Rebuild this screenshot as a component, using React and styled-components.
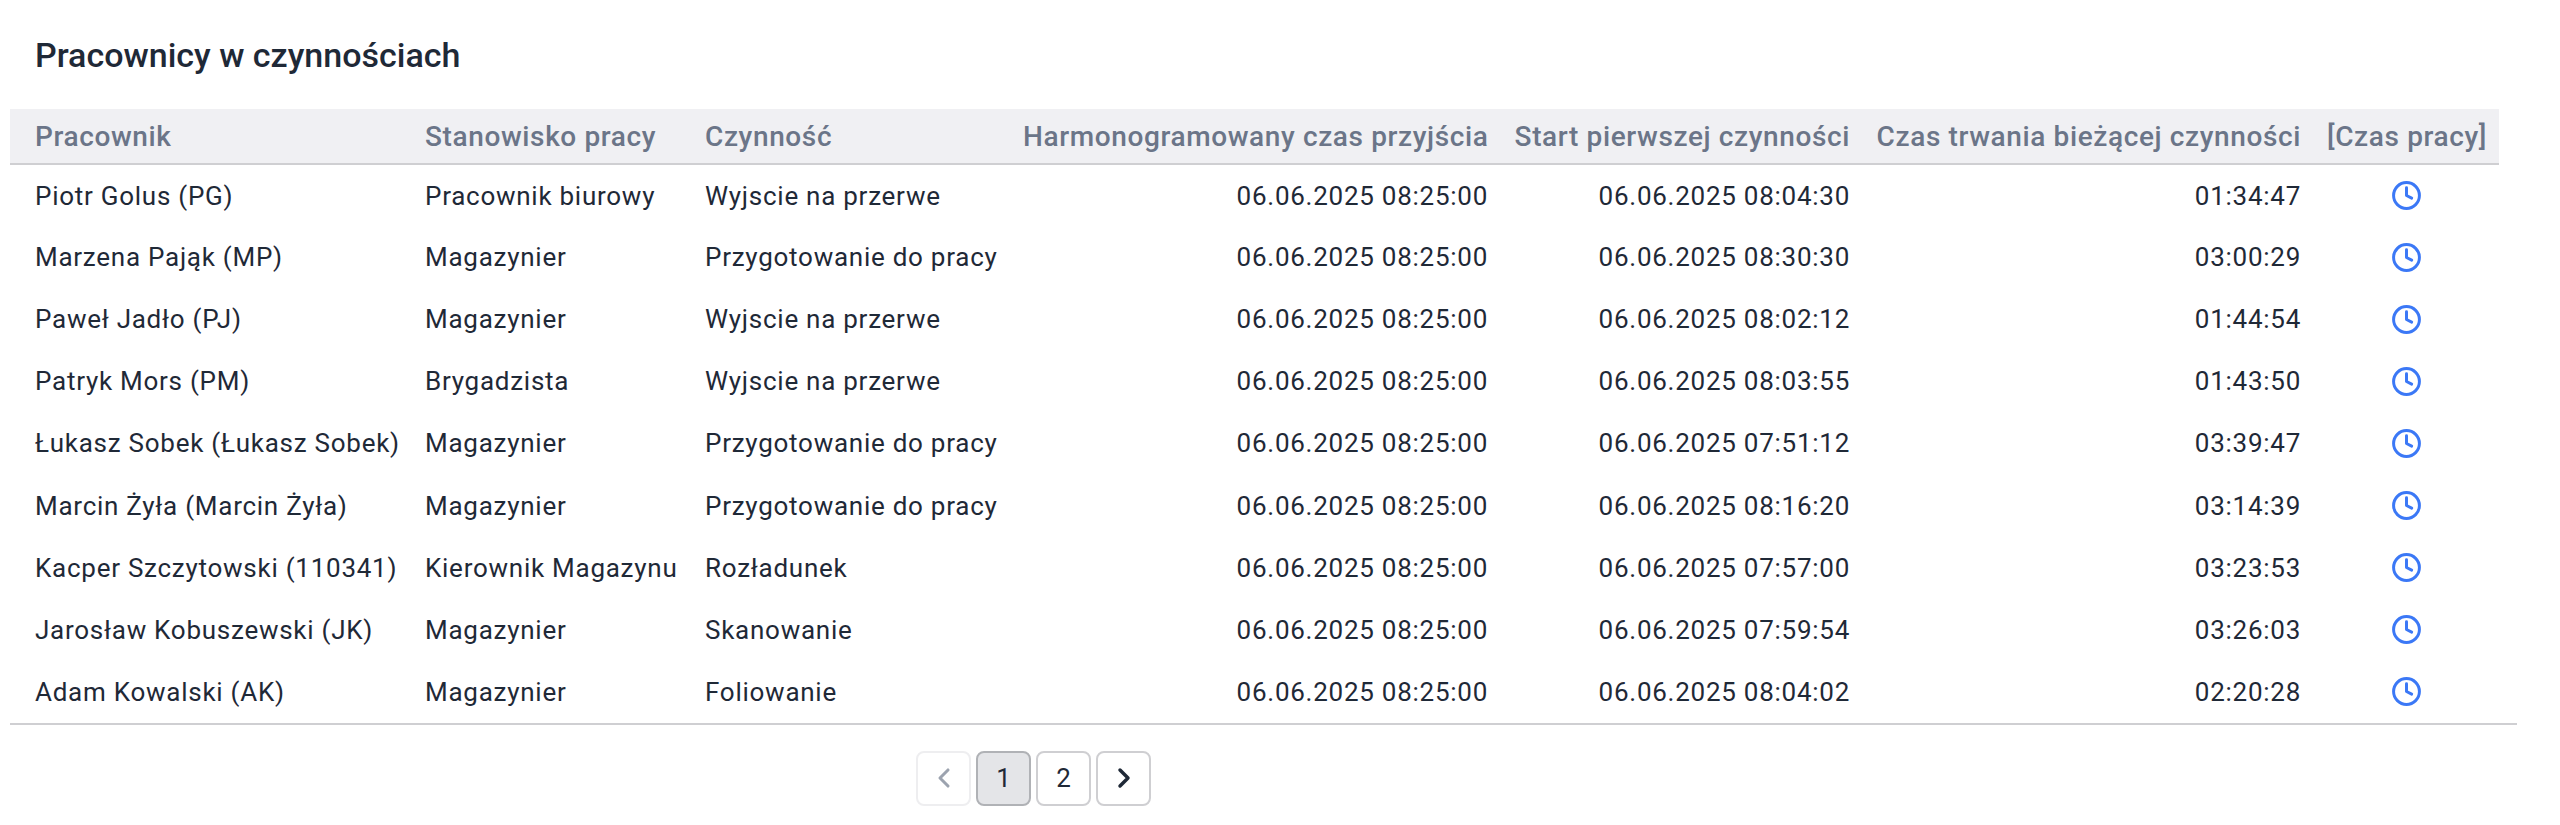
import React from 'react';
import styled, { createGlobalStyle } from 'styled-components';
import { Clock, ChevronLeft, ChevronRight } from 'lucide-react';

const Global = createGlobalStyle`
  html, body { margin: 0; padding: 0; background: #fff; }
  body { font-family: Roboto, "Liberation Sans", sans-serif; color: #1f2937; }
`;

const Page = styled.div`
  width: 2560px;
  height: 825px;
  padding: 0 43px 0 10px;
  box-sizing: border-box;
  overflow: hidden;
`;

const Title = styled.h1`
  margin: 0;
  height: 109px;
  padding: 35px 0 0 25px;
  box-sizing: border-box;
  font-size: 34px;
  line-height: 40px;
  font-weight: 500;
  color: #1f2937;
`;

const TableFrame = styled.div`
  border-bottom: 2px solid #cfcfd2;
`;

const Table = styled.table`
  width: 2489px;
  table-layout: fixed;
  border-collapse: collapse;
`;

const Head = styled.th`
  height: 55px;
  padding: 0 13px;
  box-sizing: border-box;
  background: #f0f0f3;
  border-bottom: 2px solid #cfcfd2;
  width: ${p => p.$w}px;
  text-align: ${p => p.$align || 'left'};
  font-size: 28px;
  font-weight: 500;
  letter-spacing: 0.62px;
  white-space: nowrap;
  color: #6b7588;
  &:first-child { padding-left: 25px; }
`;

const Cell = styled.td`
  height: 62.1px;
  padding: 0 13px;
  box-sizing: border-box;
  text-align: ${p => p.$align || 'left'};
  font-size: 26px;
  letter-spacing: 0.74px;
  white-space: nowrap;
  color: #1f2937;
  &:first-child { padding-left: 25px; }
`;

const ClockIcon = styled(Clock)`
  display: block;
  margin: 0 auto;
  width: 31px;
  height: 31px;
  color: #3b78f6;
`;

const Pager = styled.nav`
  display: flex;
  gap: 5px;
  padding: 26px 0 0 906px;
`;

const PageButton = styled.button`
  width: 55px;
  height: 55px;
  padding: 0;
  display: flex;
  align-items: center;
  justify-content: center;
  box-sizing: border-box;
  border: 2px solid ${p => (p.$active ? '#b0b2b6' : p.disabled ? '#eeeef0' : '#cfcfd2')};
  border-radius: 8px;
  background: ${p => (p.$active ? '#e4e5e8' : '#fff')};
  color: ${p => (p.disabled ? '#9ca3af' : '#1f2937')};
  font-family: inherit;
  font-size: 26px;
`;

const columns = [
  { label: 'Pracownik', w: 402 },
  { label: 'Stanowisko pracy', w: 280 },
  { label: 'Czynność', w: 318 },
  { label: 'Harmonogramowany czas przyjścia', w: 491, align: 'right' },
  { label: 'Start pierwszej czynności', w: 362, align: 'right' },
  { label: 'Czas trwania bieżącej czynności', w: 451, align: 'right' },
  { label: '[Czas pracy]', w: 185, align: 'right' },
];

const rows = [
  ['Piotr Golus (PG)', 'Pracownik biurowy', 'Wyjscie na przerwe', '06.06.2025 08:04:30', '01:34:47'],
  ['Marzena Pająk (MP)', 'Magazynier', 'Przygotowanie do pracy', '06.06.2025 08:30:30', '03:00:29'],
  ['Paweł Jadło (PJ)', 'Magazynier', 'Wyjscie na przerwe', '06.06.2025 08:02:12', '01:44:54'],
  ['Patryk Mors (PM)', 'Brygadzista', 'Wyjscie na przerwe', '06.06.2025 08:03:55', '01:43:50'],
  ['Łukasz Sobek (Łukasz Sobek)', 'Magazynier', 'Przygotowanie do pracy', '06.06.2025 07:51:12', '03:39:47'],
  ['Marcin Żyła (Marcin Żyła)', 'Magazynier', 'Przygotowanie do pracy', '06.06.2025 08:16:20', '03:14:39'],
  ['Kacper Szczytowski (110341)', 'Kierownik Magazynu', 'Rozładunek', '06.06.2025 07:57:00', '03:23:53'],
  ['Jarosław Kobuszewski (JK)', 'Magazynier', 'Skanowanie', '06.06.2025 07:59:54', '03:26:03'],
  ['Adam Kowalski (AK)', 'Magazynier', 'Foliowanie', '06.06.2025 08:04:02', '02:20:28'],
];

export default function App() {
  return (
    <Page>
      <Global />
      <Title>Pracownicy w czynnościach</Title>
      <TableFrame>
        <Table>
          <thead>
            <tr>
              {columns.map(c => (
                <Head key={c.label} $w={c.w} $align={c.align}>{c.label}</Head>
              ))}
            </tr>
          </thead>
          <tbody>
            {rows.map(r => (
              <tr key={r[0]}>
                <Cell>{r[0]}</Cell>
                <Cell>{r[1]}</Cell>
                <Cell>{r[2]}</Cell>
                <Cell $align="right">06.06.2025 08:25:00</Cell>
                <Cell $align="right">{r[3]}</Cell>
                <Cell $align="right">{r[4]}</Cell>
                <Cell><ClockIcon strokeWidth={2.3} /></Cell>
              </tr>
            ))}
          </tbody>
        </Table>
      </TableFrame>
      <Pager>
        <PageButton disabled><ChevronLeft size={32} strokeWidth={2.3} /></PageButton>
        <PageButton $active>1</PageButton>
        <PageButton>2</PageButton>
        <PageButton><ChevronRight size={32} strokeWidth={2.6} /></PageButton>
      </Pager>
    </Page>
  );
}
